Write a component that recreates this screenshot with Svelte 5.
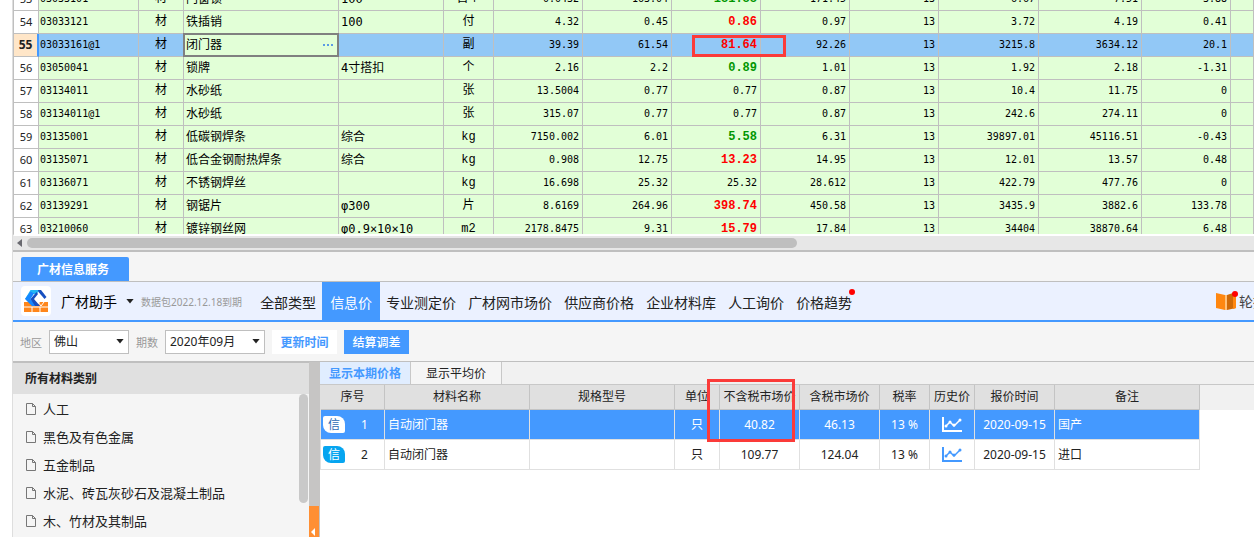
<script lang="ts">
  type Tone = 'up' | 'down' | '';
  type Material = {
    no: number; code: string; name: string; spec: string; unit: string;
    qty: string; budget: string; market: string; tone: Tone; taxed: string;
    total: string; taxedTotal: string; diff: string;
  };

  const row = (
    no: number, code: string, name: string, spec: string, unit: string, qty: string, budget: string,
    market: string, tone: Tone, taxed: string, total: string, taxedTotal: string, diff: string
  ): Material => ({ no, code, name, spec, unit, qty, budget, market, tone, taxed, total, taxedTotal, diff });

  const materials = [
    row(53, '03033101', '门窗锁', '100', '百个', '0.0432', '163.04', '181.88', 'down', '171.45', '6.67', '7.51', '3.88'),
    row(54, '03033121', '铁插销', '100', '付', '4.32', '0.45', '0.86', 'up', '0.97', '3.72', '4.19', '0.41'),
    row(55, '03033161@1', '闭门器', '', '副', '39.39', '61.54', '81.64', 'up', '92.26', '3215.8', '3634.12', '20.1'),
    row(56, '03050041', '锁牌', '4寸搭扣', '个', '2.16', '2.2', '0.89', 'down', '1.01', '1.92', '2.18', '-1.31'),
    row(57, '03134011', '水砂纸', '', '张', '13.5004', '0.77', '0.77', '', '0.87', '10.4', '11.75', '0'),
    row(58, '03134011@1', '水砂纸', '', '张', '315.07', '0.77', '0.77', '', '0.87', '242.6', '274.11', '0'),
    row(59, '03135001', '低碳钢焊条', '综合', 'kg', '7150.002', '6.01', '5.58', 'down', '6.31', '39897.01', '45116.51', '-0.43'),
    row(60, '03135071', '低合金钢耐热焊条', '综合', 'kg', '0.908', '12.75', '13.23', 'up', '14.95', '12.01', '13.57', '0.48'),
    row(61, '03136071', '不锈钢焊丝', '', 'kg', '16.698', '25.32', '25.32', '', '28.612', '422.79', '477.76', '0'),
    row(62, '03139291', '钢锯片', 'φ300', '片', '8.6169', '264.96', '398.74', 'up', '450.58', '3435.9', '3882.6', '133.78'),
    row(63, '03210060', '镀锌钢丝网', 'φ0.9×10×10', 'm2', '2178.8475', '9.31', '15.79', 'up', '17.84', '34404', '38870.64', '6.48'),
  ];

  const navItems = ['全部类型', '信息价', '专业测定价', '广材网市场价', '供应商价格', '企业材料库', '人工询价', '价格趋势'];
  const categories = ['人工', '黑色及有色金属', '五金制品', '水泥、砖瓦灰砂石及混凝土制品', '木、竹材及其制品'];
  const headings = ['序号', '材料名称', '规格型号', '单位', '不含税市场价', '含税市场价', '税率', '历史价', '报价时间', '备注'];
  const quotes = [
    { name: '自动闭门器', unit: '只', net: '40.82', gross: '46.13', rate: '13 %', date: '2020-09-15', note: '国产' },
    { name: '自动闭门器', unit: '只', net: '109.77', gross: '124.04', rate: '13 %', date: '2020-09-15', note: '进口' },
  ];

  let current = $state(55);
  let nav = $state('信息价');
  let tab = $state(0);
  let picked = $state(0);
</script>

<div class="shell">
  <div class="grid">
    <table>
      <colgroup>
        <col class="c-no" /><col class="c-wide" /><col class="c-type" /><col class="c-name" /><col class="c-spec" /><col class="c-unit" />
        <col class="c-num" /><col class="c-num" /><col class="c-num" /><col class="c-num" /><col class="c-num" />
        <col class="c-wide" /><col class="c-sum" /><col class="c-num" /><col />
      </colgroup>
      <tbody>
        {#each materials as m}
          <tr class:current={current === m.no} onclick={() => (current = m.no)}>
            <th scope="row">{m.no}</th>
            <td class="code">{m.code}</td>
            <td class="mid">材</td>
            <td class="name">
              {#if current === m.no}
                <div class="editor">
                  <input aria-label="名称" value={m.name} />
                  <button aria-label="选择"><i></i><i></i><i></i></button>
                </div>
              {:else}{m.name}{/if}
            </td>
            <td class="name">{m.spec}</td>
            <td class="mid">{m.unit}</td>
            <td class="num">{m.qty}</td>
            <td class="num">{m.budget}</td>
            <td class="num {m.tone}">{m.market}{#if m.no === 55}<span class="mark mark-price"></span>{/if}</td>
            <td class="num">{m.taxed}</td>
            <td class="num">13</td>
            <td class="num">{m.total}</td>
            <td class="num">{m.taxedTotal}</td>
            <td class="num">{m.diff}</td>
            <td></td>
          </tr>
        {/each}
      </tbody>
    </table>
  </div>

  <div class="hscroll"><span class="arrow-left"></span><span class="thumb"></span></div>

  <div class="service-tabs"><button>广材信息服务</button></div>

  <header>
    <svg class="logo" viewBox="0 0 30 30" aria-hidden="true">
      <rect width="30" height="30" rx="4" fill="#fff" />
      <path d="M3 16h5l4 4h4l3-4h8v10H3z" fill="#ff861b" />
      <path d="M3 21h24M11 21v5M19 21v5M17 16l3 4 3-4" fill="none" stroke="#fff" />
      <path d="M9.500 4H19l-3.500 4H12l-3.500 5H4z" fill="#22b6f4" />
      <path d="M4 13 9.500 5.500 13 7.500 9.500 13l6.500 7h-5z" fill="#1687ff" />
      <path d="M9.500 13 15.500 6 17 8l-4 5 6 7h-5z" fill="#164fc0" />
      <path d="M17 4h3l5.500 7-2 2L17.500 6z" fill="#164fc0" />
    </svg>
    <button class="brand">广材助手<span class="caret"></span></button>
    <span class="expiry">数据包2022.12.18到期</span>
    <nav>
      {#each navItems as item}
        <button class:active={nav === item} onclick={() => (nav = item)}>
          {item}{#if item === '价格趋势'}<span class="dot"></span>{/if}
        </button>
      {/each}
    </nav>
    <button class="carousel">
      <svg viewBox="0 0 22 20" aria-hidden="true">
        <path d="M0 2 9 4v15L0 17z" fill="#ff8710" />
        <path d="M11 4 20 1v16l-9 2z" fill="#cf6907" />
        <path d="M17 2l3-1v16l-3 1z" fill="#ff8710" />
        <path d="M9 4h2v15H9z" fill="#ffc078" />
        <circle cx="19" cy="3" r="3" fill="#f00" />
      </svg>
      轮播
    </button>
  </header>

  <form class="filters" onsubmit={(e) => e.preventDefault()}>
    <label for="region">地区</label>
    <span class="select region"><select id="region"><option>佛山</option></select><span class="caret"></span></span>
    <label for="period">期数</label>
    <span class="select period"><select id="period"><option>2020年09月</option></select><span class="caret"></span></span>
    <button class="refresh">更新时间</button>
    <button class="settle">结算调差</button>
  </form>

  <div class="lower">
    <aside>
      <h2>所有材料类别</h2>
      <ul>
        {#each categories as c}
          <li>
            <svg viewBox="0 0 10 12" aria-hidden="true"><path d="M.5.5h6l3 3v8h-9zM6.500.5v3h3" /></svg>{c}
          </li>
        {/each}
      </ul>
      <span class="vthumb"></span>
    </aside>
    <div class="splitter"><button aria-label="收起"><span></span></button></div>
    <section>
      <div class="view-tabs">
        {#each ['显示本期价格', '显示平均价'] as t, i}
          <button class:active={tab === i} onclick={() => (tab = i)}>{t}</button>
        {/each}
      </div>
      <div class="results">
        <table>
          <colgroup>
            <col class="r-seq" /><col class="r-text" /><col class="r-text" /><col class="r-unit" /><col class="r-price" /><col class="r-price" />
            <col class="r-rate" /><col class="r-unit" /><col class="r-price" /><col class="r-text" />
          </colgroup>
          <thead>
            <tr>
              {#each headings as h}
                <th scope="col">{h}{#if h === '不含税市场价'}<span class="mark mark-net"></span>{/if}</th>
              {/each}
            </tr>
          </thead>
          <tbody>
            {#each quotes as q, i}
              <tr class:picked={picked === i} onclick={() => (picked = i)}>
                <td><div class="seq"><span class="badge">信</span><span class="index">{i + 1}</span></div></td>
                <td class="left">{q.name}</td>
                <td></td>
                <td>{q.unit}</td>
                <td>{q.net}</td>
                <td>{q.gross}</td>
                <td>{q.rate}</td>
                <td>
                  <svg class="chart" viewBox="0 0 20 15" role="img" aria-label="历史价">
                    <path d="M1 0v14h19" stroke-width="2" />
                    <path d="M4 9 8 5l4 4 6-6" stroke-width="1.500" />
                    <g><circle cx="4" cy="9" r="1.500" /><circle cx="8" cy="5" r="1.500" /><circle cx="12" cy="8" r="1.500" /><circle cx="18" cy="3" r="1.500" /></g>
                  </svg>
                </td>
                <td>{q.date}</td>
                <td class="left">{q.note}</td>
              </tr>
            {/each}
          </tbody>
        </table>
      </div>
    </section>
  </div>
</div>

<style>
  :global(body) { background: #fff; overflow-x: hidden; }
  .shell { display: flex; flex-direction: column; min-height: 100vh; margin-left: 12px; border-left: 1px solid #dedede; box-sizing: border-box; color: #222; font-family: 'Noto Sans', 'Noto Sans CJK SC', sans-serif; font-size: 12px; overflow: hidden; }
  button, input, select { font: inherit; color: inherit; margin: 0; padding: 0; border: 0; background: none; border-radius: 0; }
  button { cursor: pointer; white-space: nowrap; }
  table { table-layout: fixed; border-collapse: separate; border-spacing: 0; }
  th, td { box-sizing: border-box; padding: 0; white-space: nowrap; }

  /* material sheet */
  .grid { height: 234px; overflow: hidden; border-left: 1px solid #bfbfbf; border-bottom: 2px solid #fff; background: #e2ffd7; }
  .grid table { width: 100%; margin-top: -12px; }
  .grid th, .grid td { height: 23px; line-height: 20px; border-right: 1px solid #bfbfbf; border-bottom: 1px solid #bfbfbf; color: #000; }
  .grid td { background: #e2ffd7; position: relative; }
  .grid th { background: #fff; font-size: 11px; font-weight: 400; color: #222; line-height: 22px; }
  .c-no { width: 25px; }
  .c-wide { width: 100px; }
  .c-type { width: 45px; }
  .c-name { width: 155px; }
  .c-spec { width: 105px; }
  .c-unit { width: 50px; }
  .c-num { width: 89px; }
  .c-sum { width: 103px; }
  .grid .code, .grid .num, .grid .name { font-family: 'DejaVu Sans Mono', 'Noto Sans CJK SC', monospace; }
  .grid .code { font-size: 10px; padding-left: 1px; }
  .grid .num { font-size: 10px; text-align: right; padding-right: 3px; }
  .grid .name { font-size: 12px; padding-left: 2px; }
  .grid .mid { font-size: 12px; text-align: center; font-family: 'Liberation Mono', 'Noto Sans CJK SC', monospace; }
  .grid .up, .grid .down { font-family: 'Liberation Mono', monospace; font-size: 12px; font-weight: 700; }
  .grid .up { color: #f00; }
  .grid .down { color: #009600; }
  .grid .current td { background: #92c8f6; }
  .grid .current th { background: #ffe6c8; font-size: 12px; font-weight: 700; border-right: 2px solid #4499ff; }
  .editor { position: absolute; inset: -1px; display: flex; border: 2px solid #808080; background: #e2ffd7; }
  .editor input { flex: 1; min-width: 0; padding-left: 1px; outline: 0; }
  .editor button { display: flex; align-items: center; gap: 2px; padding: 0 4px; }
  .editor i { width: 2px; height: 2px; background: #5b9be6; }
  .mark { position: absolute; z-index: 2; box-sizing: border-box; border: 3px solid #fb3b39; pointer-events: none; }
  .mark-price { left: 20px; top: 1px; width: 94px; height: 22px; }
  .mark-net { left: -13px; top: -6px; width: 88px; height: 63px; }

  .hscroll { display: flex; align-items: center; height: 14px; padding-left: 4px; gap: 4px; background: #e7e7e7; border-bottom: 2px solid #bfbfbf; }
  .arrow-left { border: 4px solid transparent; border-left: 0; border-right: 5px solid #6a6a70; margin-right: 1px; }
  .thumb { width: 770px; height: 10px; border-radius: 5px; background: #bfbfbf; }

  .service-tabs { background: #f5f5f5; padding: 5px 8px 0; border-bottom: 1px solid #bfbfbf; display: flex; }
  .service-tabs button { width: 108px; height: 24px; background: #4499ff; color: #fff; font-weight: 700; border-radius: 2px 2px 0 0; padding-right: 4px; }

  header { display: flex; align-items: center; height: 38px; padding-left: 8px; background: #ebf1ff; border-bottom: 2px solid #4499ff; }
  .logo { width: 30px; height: 30px; flex: none; }
  .brand { display: flex; align-items: center; gap: 9px; margin-left: 10px; font-size: 14px; color: #000; }
  .caret { width: 8px; height: 5px; background: #222; clip-path: polygon(0 0, 100% 0, 50% 100%); }
  .expiry { margin-left: 7px; font-size: 10px; color: #999; white-space: nowrap; }
  nav { display: flex; align-self: stretch; margin-left: 12px; }
  nav button { position: relative; padding: 2px 6px 0; font-size: 14px; }
  nav button.active { background: #4499ff; color: #fff; padding: 2px 8px 0; }
  .dot { position: absolute; right: 3px; top: 7px; width: 6px; height: 6px; border-radius: 3px; background: #f00; }
  .carousel { display: flex; align-items: center; gap: 1px; flex: none; width: 38px; margin-left: auto; overflow: hidden; font-size: 14px; color: #444; }
  .carousel svg { width: 22px; height: 20px; flex: none; }

  .filters { display: flex; align-items: center; height: 39px; padding-left: 7px; background: #f5f5f5; border-bottom: 1px solid #bfbfbf; }
  .filters label { font-size: 11px; color: #999; margin-right: 7px; }
  .select { position: relative; display: flex; height: 24px; margin-right: 7px; }
  .select select { appearance: none; width: 100%; padding-left: 4px; border: 1px solid #bfbfbf; background: #fff; outline: 0; }
  .select .caret { position: absolute; right: 5px; top: 9px; pointer-events: none; }
  .region { width: 80px; }
  .period { width: 100px; }
  .filters button { width: 65px; height: 24px; font-weight: 500; }
  .filters .refresh { background: #fff; color: #4499ff; margin-right: 7px; font-weight: 700; }
  .filters .settle { background: #4499ff; color: #fff; }

  .lower { flex: 1; display: flex; }
  aside { position: relative; width: 296px; flex: none; background: #f5f5f5; }
  h2 { margin: 0; height: 32px; line-height: 32px; padding-left: 12px; background: #e0e0e0; border-top: 1px solid #bfbfbf; box-sizing: border-box; font-size: 12px; font-weight: 700; }
  ul { list-style: none; margin: 0; padding: 0 0 0 13px; }
  li { display: flex; align-items: center; gap: 7px; height: 28px; font-size: 13px; }
  li svg { width: 10px; height: 12px; margin-top: 2px; fill: none; stroke: #777; }
  .vthumb { position: absolute; right: 1px; top: 32px; width: 9px; height: 109px; border-radius: 5px; background: #c9c9c9; }
  .splitter { display: flex; flex-direction: column; justify-content: flex-end; width: 10px; flex: none; background: #c6c5c4; border-right: 1px solid #c6c5c4; }
  .splitter button { height: 31px; background: #ff8f33; display: flex; align-items: flex-end; padding: 0 0 1px 2px; }
  .splitter span { border: 4px solid transparent; border-left: 0; border-right-color: #fff; }

  section { flex: 1; min-width: 0; }
  .view-tabs { display: flex; height: 22px; background: #f1f1f1; border-bottom: 1px solid #c8c8c8; }
  .view-tabs button { width: 91px; background: #f5f5f5; border-right: 1px solid #c8c8c8; }
  .view-tabs .active { background: #e0edff; color: #4499ff; font-weight: 700; }
  .results { background: linear-gradient(#f1f1f1 25px, #fff 25px); }
  .results table { width: 880px; border-left: 1px solid #e0e0e0; }
  .r-seq { width: 64px; }
  .r-text { width: 145px; }
  .r-unit { width: 45px; }
  .r-price { width: 80px; }
  .r-rate { width: 50px; }
  .results th { position: relative; height: 25px; line-height: 24px; background: #e0e0e0; border-right: 1px solid #c4c4c4; border-bottom: 1px solid #c4c4c4; font-weight: 400; }
  .results td { height: 30px; line-height: 29px; text-align: center; border-right: 1px solid #e0e0e0; border-bottom: 1px solid #e0e0e0; }
  .results .left { text-align: left; padding-left: 3px; }
  .results .picked td { background: #4499ff; color: #fff; }
  .seq { display: flex; align-items: center; padding-left: 2px; }
  .badge { width: 22px; height: 17px; line-height: 17px; border-radius: 2px 8px 2px 8px; background: #06a5f0; color: #fff; }
  .picked .badge { background: #fff; color: #2b6cb5; }
  .index { flex: 1; }
  .chart { display: block; width: 20px; height: 15px; margin: auto; fill: none; stroke: #4499ff; }
  .chart g { fill: #4499ff; stroke: none; }
  .picked .chart { stroke: #fff; }
  .picked .chart g { fill: #fff; }
</style>
